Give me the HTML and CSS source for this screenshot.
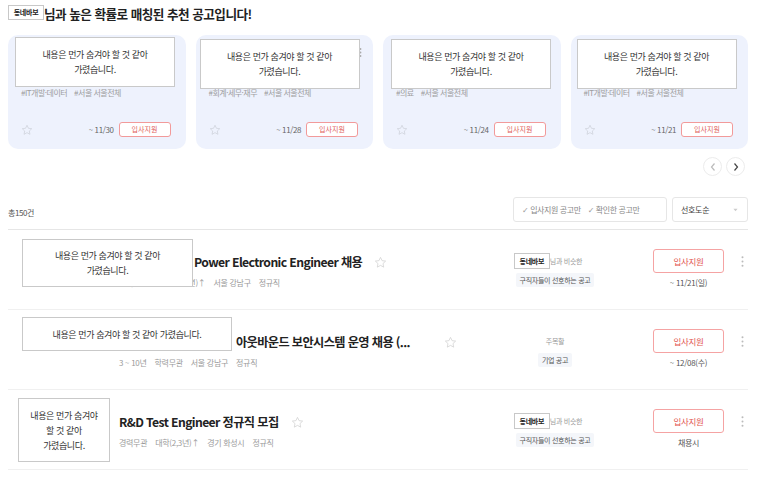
FILE: index.html
```html
<!DOCTYPE html>
<html lang="ko">
<head>
<meta charset="utf-8">
<title>추천 공고</title>
<link rel="stylesheet" href="styles.css">
</head>
<body>
<div class="page">
  <h2 class="headline"><span class="nick">동네바보</span><span class="headline-text">님과 높은 확률로 매칭된 추천 공고입니다!</span></h2>

  <div class="cards">
    <div class="card">
      <div class="card-top"><span class="c-name">(주)회사</span><svg class="kebab-sm" viewBox="0 0 3 9"><circle cx="1.5" cy="1" r="0.9"/><circle cx="1.5" cy="4.5" r="0.9"/><circle cx="1.5" cy="8" r="0.9"/></svg></div>
      <div class="c-title">데이터 엔지니어</div>
      <div class="c-tags"><span>#IT개발·데이터</span><span>#서울 서울전체</span></div>
      <div class="c-foot">
        <svg class="c-star" viewBox="0 0 24 24"><path d="M12 2.5l2.9 6.1 6.6.8-4.9 4.6 1.3 6.6L12 17.3l-5.9 3.3 1.3-6.6-4.9-4.6 6.6-.8z"/></svg>
        <span class="c-date">~ 11/30</span><button class="c-apply">입사지원</button>
      </div>
      <div class="mask mask-c mask-c1">내용은 먼가 숨겨야 할 것 같아<br>가렸습니다.</div>
    </div>
    <div class="card">
      <div class="card-top"><span class="c-name">(주)회사</span><svg class="kebab-sm" viewBox="0 0 3 9"><circle cx="1.5" cy="1" r="0.9"/><circle cx="1.5" cy="4.5" r="0.9"/><circle cx="1.5" cy="8" r="0.9"/></svg></div>
      <div class="c-title">회계 담당자</div>
      <div class="c-tags"><span>#회계·세무·재무</span><span>#서울 서울전체</span></div>
      <div class="c-foot">
        <svg class="c-star" viewBox="0 0 24 24"><path d="M12 2.5l2.9 6.1 6.6.8-4.9 4.6 1.3 6.6L12 17.3l-5.9 3.3 1.3-6.6-4.9-4.6 6.6-.8z"/></svg>
        <span class="c-date">~ 11/28</span><button class="c-apply">입사지원</button>
      </div>
      <div class="mask mask-c mask-c2">내용은 먼가 숨겨야 할 것 같아<br>가렸습니다.</div>
    </div>
    <div class="card">
      <div class="card-top"><span class="c-name">(주)회사</span><svg class="kebab-sm" viewBox="0 0 3 9"><circle cx="1.5" cy="1" r="0.9"/><circle cx="1.5" cy="4.5" r="0.9"/><circle cx="1.5" cy="8" r="0.9"/></svg></div>
      <div class="c-title">의료 담당자</div>
      <div class="c-tags"><span>#의료</span><span>#서울 서울전체</span></div>
      <div class="c-foot">
        <svg class="c-star" viewBox="0 0 24 24"><path d="M12 2.5l2.9 6.1 6.6.8-4.9 4.6 1.3 6.6L12 17.3l-5.9 3.3 1.3-6.6-4.9-4.6 6.6-.8z"/></svg>
        <span class="c-date">~ 11/24</span><button class="c-apply">입사지원</button>
      </div>
      <div class="mask mask-c mask-c3">내용은 먼가 숨겨야 할 것 같아<br>가렸습니다.</div>
    </div>
    <div class="card">
      <div class="card-top"><span class="c-name">(주)회사</span><svg class="kebab-sm" viewBox="0 0 3 9"><circle cx="1.5" cy="1" r="0.9"/><circle cx="1.5" cy="4.5" r="0.9"/><circle cx="1.5" cy="8" r="0.9"/></svg></div>
      <div class="c-title">개발자</div>
      <div class="c-tags"><span>#IT개발·데이터</span><span>#서울 서울전체</span></div>
      <div class="c-foot">
        <svg class="c-star" viewBox="0 0 24 24"><path d="M12 2.5l2.9 6.1 6.6.8-4.9 4.6 1.3 6.6L12 17.3l-5.9 3.3 1.3-6.6-4.9-4.6 6.6-.8z"/></svg>
        <span class="c-date">~ 11/21</span><button class="c-apply">입사지원</button>
      </div>
      <div class="mask mask-c mask-c4">내용은 먼가 숨겨야 할 것 같아<br>가렸습니다.</div>
    </div>
  </div>

  <div class="nav">
    <button class="nav-btn" aria-label="이전"><svg viewBox="0 0 6 10" class="chev chev-prev"><path d="M4.5 1.5L1.5 5l3 3.5"/></svg></button>
    <button class="nav-btn" aria-label="다음"><svg viewBox="0 0 6 10" class="chev chev-next"><path d="M1.5 1.5L4.5 5l-3 3.5"/></svg></button>
  </div>

  <div class="filter-bar">
    <span class="total">총150건</span>
    <div class="filters">
      <span class="chk"><span class="tick">✓</span> 입사지원 공고만</span>
      <span class="chk"><span class="tick">✓</span> 확인한 공고만</span>
    </div>
    <div class="sort"><span>선호도순</span><svg class="caret" viewBox="0 0 6 4"><path d="M0.5 0.5h5L3 3.5z"/></svg></div>
  </div>

  <div class="list">
    <div class="row">
      <div class="company"></div>
      <div class="info">
        <div class="t-line"><span class="title"><span class="pre pre-1">[전장] 전력</span>Power Electronic Engineer 채용</span>
          <svg class="star" viewBox="0 0 24 24"><path d="M12 2.5l2.9 6.1 6.6.8-4.9 4.6 1.3 6.6L12 17.3l-5.9 3.3 1.3-6.6-4.9-4.6 6.6-.8z"/></svg></div>
        <div class="meta"><span>경력3~5년</span><span>대학교(4년)↑</span><span>서울 강남구</span><span>정규직</span></div>
      </div>
      <div class="rec">
        <div class="rec-line rec-line-user"><span class="nick nick-sm">동네바보</span><span>님과 비슷한</span></div>
        <div class="rec-tag">구직자들이 선호하는 공고</div>
      </div>
      <div class="apply-col"><button class="apply">입사지원</button><span class="deadline">~ 11/21(일)</span></div>
      <div class="more"><svg class="kebab" viewBox="0 0 3 11"><circle cx="1.5" cy="1.2" r="1"/><circle cx="1.5" cy="5.5" r="1"/><circle cx="1.5" cy="9.8" r="1"/></svg></div>
      <div class="mask mask-r1">내용은 먼가 숨겨야 할 것 같아<br>가렸습니다.</div>
    </div>

    <div class="row">
      <div class="company"></div>
      <div class="info">
        <div class="t-line"><span class="title"><span class="pre pre-2">[보안] 정보보호팀</span>아웃바운드 보안시스템 운영 채용 (...</span>
          <svg class="star star-wide" viewBox="0 0 24 24"><path d="M12 2.5l2.9 6.1 6.6.8-4.9 4.6 1.3 6.6L12 17.3l-5.9 3.3 1.3-6.6-4.9-4.6 6.6-.8z"/></svg></div>
        <div class="meta"><span>3 ~ 10년</span><span>학력무관</span><span>서울 강남구</span><span>정규직</span></div>
      </div>
      <div class="rec">
        <div class="rec-line"><span>주목할</span></div>
        <div class="rec-tag">기업 공고</div>
      </div>
      <div class="apply-col"><button class="apply">입사지원</button><span class="deadline">~ 12/08(수)</span></div>
      <div class="more"><svg class="kebab" viewBox="0 0 3 11"><circle cx="1.5" cy="1.2" r="1"/><circle cx="1.5" cy="5.5" r="1"/><circle cx="1.5" cy="9.8" r="1"/></svg></div>
      <div class="mask mask-r2">내용은 먼가 숨겨야 할 것 같아 가렸습니다.</div>
    </div>

    <div class="row">
      <div class="company"></div>
      <div class="info">
        <div class="t-line"><span class="title">R&amp;D Test Engineer 정규직 모집</span>
          <svg class="star" viewBox="0 0 24 24"><path d="M12 2.5l2.9 6.1 6.6.8-4.9 4.6 1.3 6.6L12 17.3l-5.9 3.3 1.3-6.6-4.9-4.6 6.6-.8z"/></svg></div>
        <div class="meta"><span>경력무관</span><span>대학(2,3년)↑</span><span>경기 화성시</span><span>정규직</span></div>
      </div>
      <div class="rec">
        <div class="rec-line rec-line-user"><span class="nick nick-sm">동네바보</span><span>님과 비슷한</span></div>
        <div class="rec-tag">구직자들이 선호하는 공고</div>
      </div>
      <div class="apply-col"><button class="apply">입사지원</button><span class="deadline">채용시</span></div>
      <div class="more"><svg class="kebab" viewBox="0 0 3 11"><circle cx="1.5" cy="1.2" r="1"/><circle cx="1.5" cy="5.5" r="1"/><circle cx="1.5" cy="9.8" r="1"/></svg></div>
      <div class="mask mask-r3">내용은 먼가 숨겨야<br>할 것 같아<br>가렸습니다.</div>
    </div>
  </div>
</div>
</body>
</html>
```

FILE: styles.css
```css
* { box-sizing: border-box; margin: 0; padding: 0; }

body {
  font-family: "Noto Sans CJK KR", "Noto Sans", "DejaVu Sans", sans-serif;
  color: #333;
  background: #fff;
}

.page {
  width: 740px;
  margin-left: 8px;
  padding-top: 5px;
}

/* headline */
.headline {
  display: flex;
  align-items: center;
  height: 15px;
  margin-bottom: 15px;
  font-size: 12.6px;
  font-weight: 700;
  letter-spacing: -0.5px;
  line-height: 15px;
  color: #222;
}
.headline-text { position: relative; top: 1px; }

.nick {
  display: inline-flex;
  align-items: center;
  justify-content: center;
  width: 36px;
  height: 15px;
  border: 1px solid #c8c8c8;
  background: #fff;
  font-size: 7px;
  font-weight: 700;
  color: #222;
  letter-spacing: -0.3px;
  line-height: 1;
}
.nick-sm { height: 16px; }

/* cards */
.cards {
  display: grid;
  grid-template-columns: repeat(4, 1fr);
  gap: 10px;
}
.card {
  position: relative;
  height: 114px;
  background: #eef2fd;
  border-radius: 10px;
  padding: 10px 15px 12px 13px;
  display: flex;
  flex-direction: column;
}
.card-top {
  display: flex;
  justify-content: space-between;
  align-items: center;
  height: 14px;
  margin-right: -4px;
  font-size: 9px;
  color: #666;
}
.kebab-sm { width: 3px; height: 9px; fill: #aaa; }
.c-title {
  margin-top: 4px;
  font-size: 11px;
  font-weight: 700;
  line-height: 16px;
}
.c-tags {
  margin-top: 8px;
  display: flex;
  gap: 7px;
  font-size: 8px;
  line-height: 12px;
  color: #9d9d9d;
  letter-spacing: -0.5px;
}
.c-foot {
  margin-top: auto;
  display: flex;
  align-items: center;
  height: 15px;
}
.c-star {
  width: 12px;
  height: 12px;
  fill: none;
  stroke: #cfd3dc;
  stroke-width: 1.6;
  stroke-linejoin: round;
}
.c-date {
  margin-left: auto;
  margin-right: 5px;
  font-size: 8px;
  color: #666;
  letter-spacing: -0.4px;
}
.c-apply {
  width: 52px;
  height: 15px;
  border: 1px solid #f29a9a;
  border-radius: 3px;
  background: #fff;
  color: #e0605c;
  font-family: inherit;
  font-size: 7px;
  line-height: 13px;
}

/* masks */
.mask {
  position: absolute;
  background: #fff;
  border: 1px solid #c9c9c9;
  display: flex;
  align-items: center;
  justify-content: center;
  text-align: center;
  font-size: 9px;
  line-height: 15px;
  letter-spacing: -0.4px;
  color: #333;
  z-index: 2;
}
.mask-c { width: 160px; height: 50px; }
.mask-c1 { left: 7px; top: 2px; }
.mask-c2 { left: 4px; top: 4px; }
.mask-c3 { left: 8px; top: 4px; }
.mask-c4 { left: 6px; top: 4px; }
.mask-r1 { left: 14px; top: 9px; width: 171px; height: 48px; }
.mask-r2 { left: 14px; top: 7px; width: 210px; height: 34px; }
.mask-r3 { left: 10px; top: 8px; width: 92px; height: 64px; }

/* nav */
.nav {
  display: flex;
  justify-content: flex-end;
  gap: 4px;
  margin-top: 8px;
  padding-right: 3px;
}
.nav-btn {
  width: 19px;
  height: 19px;
  border-radius: 50%;
  border: 1px solid #ececec;
  background: #fff;
  display: flex;
  align-items: center;
  justify-content: center;
}
.chev { width: 6px; height: 10px; fill: none; stroke-width: 1.2; }
.chev-prev { stroke: #bbb; }
.chev-next { stroke: #444; }

/* filter bar */
.filter-bar {
  display: flex;
  align-items: flex-start;
  height: 33px;
  margin-top: 21px;
  padding-bottom: 7px;
  border-bottom: 1px solid #e6e6e6;
}
.total {
  margin-top: 10px;
  font-size: 8px;
  line-height: 12px;
  color: #555;
  letter-spacing: -0.4px;
}
.filters {
  margin-left: auto;
  width: 154px;
  height: 25px;
  border: 1px solid #e6e6e6;
  border-radius: 3px;
  display: flex;
  align-items: center;
  gap: 7px;
  padding-left: 8px;
  font-size: 8px;
  color: #888;
  letter-spacing: -0.4px;
}
.tick { font-family: "DejaVu Sans", sans-serif; font-size: 8px; color: #999; }
.sort {
  margin-left: 5px;
  width: 76px;
  height: 25px;
  border: 1px solid #e6e6e6;
  border-radius: 3px;
  display: flex;
  align-items: center;
  justify-content: space-between;
  padding: 0 9px 0 8px;
  font-size: 8px;
  color: #444;
  letter-spacing: -0.3px;
}
.caret { width: 5px; height: 4px; fill: #ccc; }

/* list rows */
.row {
  position: relative;
  display: flex;
  height: 80px;
  border-bottom: 1px solid #f0f0f0;
}
.company { width: 111px; flex: none; }
.info { flex: 1; padding-top: 24px; }
.t-line { display: flex; align-items: center; height: 16px; }
.title {
  font-size: 12.2px;
  font-weight: 700;
  letter-spacing: -0.6px;
  color: #222;
  white-space: nowrap;
}
.pre {
  display: inline-block;
  overflow: hidden;
  vertical-align: top;
  white-space: nowrap;
}
.pre-1 { width: 75px; }
.pre-2 { width: 117px; }
.star {
  width: 13px;
  height: 13px;
  margin-left: 12px;
  fill: none;
  stroke: #d4d4d4;
  stroke-width: 1.5;
  stroke-linejoin: round;
}
.star-wide { margin-left: 34px; }
.meta {
  margin-top: 7px;
  display: flex;
  gap: 8px;
  font-size: 8px;
  line-height: 12px;
  color: #9a9a9a;
  letter-spacing: -0.3px;
}

.rec {
  width: 100px;
  flex: none;
  padding-top: 23px;
  display: flex;
  flex-direction: column;
  align-items: center;
}
.rec-line {
  display: flex;
  align-items: center;
  height: 16px;
  font-size: 7px;
  color: #999;
  letter-spacing: -0.3px;
}
.rec-line-user { padding-right: 14px; }
.rec-tag {
  margin-top: 4px;
  height: 14px;
  padding: 0 4px;
  background: #f4f6fa;
  border-radius: 2px;
  font-size: 7px;
  line-height: 14px;
  color: #555;
  letter-spacing: -0.3px;
}

.apply-col {
  width: 71px;
  flex: none;
  margin-left: 48px;
  padding-top: 19px;
  display: flex;
  flex-direction: column;
  align-items: center;
}
.apply {
  width: 71px;
  height: 24px;
  border: 1px solid #f5a3a3;
  border-radius: 3px;
  background: #fff;
  color: #e2534f;
  font-family: inherit;
  font-size: 8.5px;
  letter-spacing: -0.3px;
}
.deadline {
  margin-top: 4px;
  font-size: 8px;
  line-height: 12px;
  color: #555;
  letter-spacing: -0.3px;
}
.more {
  width: 24px;
  flex: none;
  display: flex;
  justify-content: flex-end;
  padding-top: 26px;
  padding-right: 4px;
}
.kebab { width: 3px; height: 11px; fill: #bbb; }
```
